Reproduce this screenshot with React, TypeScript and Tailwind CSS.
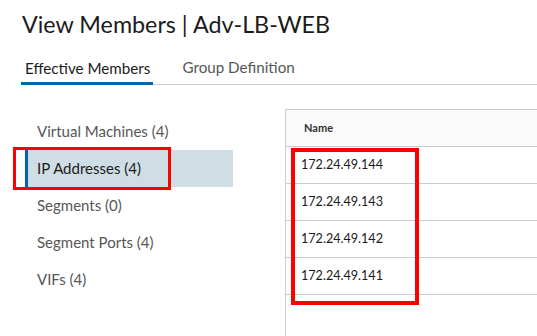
import React from "react";

const navItems = [
  { label: "Virtual Machines (4)", active: false },
  { label: "IP Addresses (4)", active: true },
  { label: "Segments (0)", active: false },
  { label: "Segment Ports (4)", active: false },
  { label: "VIFs (4)", active: false },
];

const ips = ["172.24.49.144", "172.24.49.143", "172.24.49.142", "172.24.49.141"];

export default function App() {
  return (
    <div
      className="relative w-[537px] h-[336px] overflow-hidden bg-white text-[#313131]"
      style={{ fontFamily: "Lato, 'Open Sans', sans-serif" }}
    >
      <h1 className="pl-[22px] pt-[11px] h-[55px] text-[23.3px] leading-[27px] font-normal text-[#1b1b1b]">
        View Members | Adv-LB-WEB
      </h1>
      <div className="ml-[21px] flex h-[30px] items-end border-b border-[#cccccc]">
        <div className="-mb-px h-[30px] border-b-[3px] border-[#0065ab] pl-[4px] pr-[3px] pt-[3px] text-[15.2px] leading-[20px] text-[#1b1b1b]">
          Effective Members
        </div>
        <div className="ml-[29px] h-[30px] pt-[3px] text-[15.2px] leading-[20px] text-[#565656]">
          Group Definition
        </div>
      </div>
      <div className="flex">
        <ul className="ml-[25px] mt-[28px] w-[208px]">
          {navItems.map((it) => (
            <li
              key={it.label}
              className={
                it.active
                  ? "flex h-[37px] items-center border-l-[3px] border-[#0065ab] bg-[#cfdde4] pl-[9px] text-[15px] text-[#1b1b1b]"
                  : "flex h-[37px] items-center pl-[12px] text-[15px] text-[#565656]"
              }
            >
              {it.label}
            </li>
          ))}
        </ul>
        <div className="ml-[52px] mt-[24px] h-[300px] flex-1 border-l border-t border-[#cccccc]">
          <div className="flex h-[37px] items-center border-b border-[#cccccc] bg-[#fafafa] pl-[18px] text-[11px] font-bold text-[#313131]">
            Name
          </div>
          {ips.map((ip) => (
            <div
              key={ip}
              className="flex h-[37px] items-center border-b border-[#cccccc] pl-[15px] text-[12.6px] text-[#1b1b1b]"
            >
              {ip}
            </div>
          ))}
        </div>
      </div>
      <div className="absolute left-[13px] top-[147px] h-[43px] w-[158px] border-[3px] border-[#ff0000]" />
      <div className="absolute left-[291px] top-[148px] h-[157px] w-[128px] border-[4px] border-[#ff0000]" />
    </div>
  );
}
